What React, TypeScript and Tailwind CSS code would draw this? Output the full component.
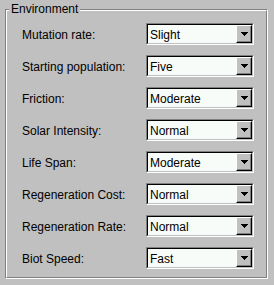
import React from 'react';

const rows: [string, string][] = [
  ['Mutation rate:', 'Slight'],
  ['Starting population:', 'Five'],
  ['Friction:', 'Moderate'],
  ['Solar Intensity:', 'Normal'],
  ['Life Span:', 'Moderate'],
  ['Regeneration Cost:', 'Normal'],
  ['Regeneration Rate:', 'Normal'],
  ['Biot Speed:', 'Fast'],
];

const Arrow = () => (
  <svg width="7" height="4" viewBox="0 0 7 4" shapeRendering="crispEdges">
    <rect x="0" y="0" width="7" height="1" fill="#000" />
    <rect x="1" y="1" width="5" height="1" fill="#000" />
    <rect x="2" y="2" width="3" height="1" fill="#000" />
    <rect x="3" y="3" width="1" height="1" fill="#000" />
  </svg>
);

const Combo: React.FC<{ value: string }> = ({ value }) => (
  <div className="h-[22px] w-[108px] border border-t-[#808080] border-l-[#808080] border-r-white border-b-white">
    <div className="h-full flex border border-t-black border-l-black border-r-[#c0c0c0] border-b-[#c0c0c0] bg-[#f8fcf8]">
      <span className="flex-1 pl-[2px] leading-[18px] pt-[1px]">{value}</span>
      <div className="w-[16px] h-full flex items-center justify-center bg-[#c0c0c0] border border-t-white border-l-white border-r-black border-b-black shadow-[inset_-1px_-1px_0_#808080]">
        <Arrow />
      </div>
    </div>
  </div>
);

export default function App() {
  return (
    <div className="w-[274px] h-[285px] bg-[#c0c0c0] pt-[9px] pl-[5px] pr-[6px] pb-[6px] font-['Liberation_Sans',Arial,sans-serif] text-[12px] text-black">
      <div className="relative h-full border border-t-[#808080] border-l-[#808080] border-r-white border-b-white">
        <div className="h-full border border-t-white border-l-white border-r-[#808080] border-b-[#808080] pt-[12px] pl-[15px]">
          <div className="grid grid-cols-[124px_108px] auto-rows-[22px] gap-y-[10px]">
            {rows.map(([label, value]) => (
              <React.Fragment key={label}>
                <span className="h-[22px] leading-[20px] pt-[2px]">{label}</span>
                <Combo value={value} />
              </React.Fragment>
            ))}
          </div>
        </div>
        <span className="absolute left-[3px] top-[-8px] bg-[#c0c0c0] px-[2px] leading-[14px]">Environment</span>
      </div>
    </div>
  );
}
